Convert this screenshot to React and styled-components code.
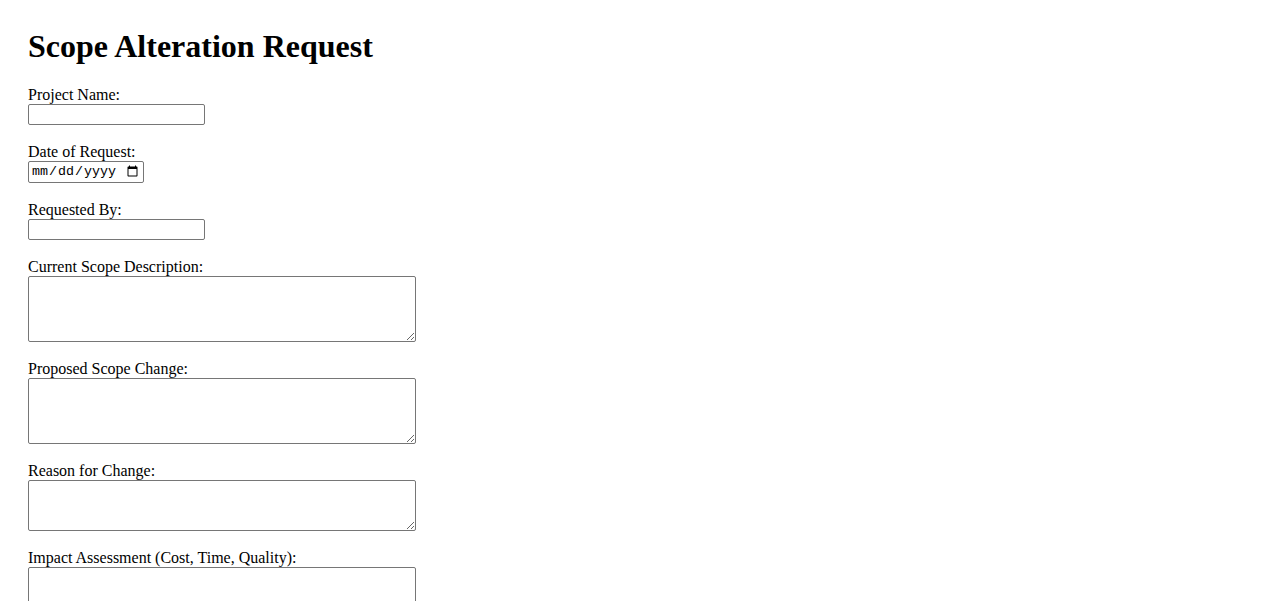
import styled, { createGlobalStyle } from "styled-components";

const GlobalStyle = createGlobalStyle`
  body {
    margin: 0;
    background: #ffffff;
    color: #000000;
    font-family: "Liberation Serif", "Times New Roman", serif;
    font-size: 16px;
  }
`;

const Page = styled.div`
  padding: 28px;
`;

const Title = styled.h1`
  margin: 0 0 21px;
  font-size: 32px;
  line-height: 36px;
  font-weight: bold;
`;

const Form = styled.form`
  display: flex;
  flex-direction: column;
  align-items: flex-start;
`;

const Field = styled.div`
  display: flex;
  flex-direction: column;
  align-items: flex-start;
  margin-bottom: 17px;
`;

const Label = styled.label`
  display: block;
  line-height: 19px;
`;

const controlBase = `
  display: block;
  box-sizing: border-box;
  margin: 0;
  border: 1px solid #767676;
  border-radius: 2px;
  background: #ffffff;
  color: #000000;
  font-size: 13.33px;
`;

const TextInput = styled.input`
  ${controlBase}
  width: 177px;
  height: 21px;
  padding: 1px 2px;
  font-family: "Liberation Sans", Arial, sans-serif;
`;

const DateInput = styled.input`
  ${controlBase}
  width: 116px;
  height: 22px;
  padding: 1px 2px;
  font-family: "Liberation Mono", "DejaVu Sans Mono", monospace;
`;

const TextArea = styled.textarea`
  ${controlBase}
  width: 388px;
  height: ${(p) => p.$h}px;
  padding: 2px;
  font-family: "Liberation Mono", monospace;
  resize: both;
`;

const fields = [
  { id: "projectName", label: "Project Name:", kind: "text" },
  { id: "requestDate", label: "Date of Request:", kind: "date" },
  { id: "requestedBy", label: "Requested By:", kind: "text" },
  { id: "currentScope", label: "Current Scope Description:", kind: "area", h: 66 },
  { id: "proposedChange", label: "Proposed Scope Change:", kind: "area", h: 66 },
  { id: "reason", label: "Reason for Change:", kind: "area", h: 51 },
  { id: "impact", label: "Impact Assessment (Cost, Time, Quality):", kind: "area", h: 66 },
];

export default function App() {
  return (
    <Page>
      <GlobalStyle />
      <Title>Scope Alteration Request</Title>
      <Form>
        {fields.map((f) => (
          <Field key={f.id}>
            <Label htmlFor={f.id}>{f.label}</Label>
            {f.kind === "text" && <TextInput id={f.id} type="text" />}
            {f.kind === "date" && <DateInput id={f.id} type="date" />}
            {f.kind === "area" && <TextArea id={f.id} $h={f.h} />}
          </Field>
        ))}
      </Form>
    </Page>
  );
}
